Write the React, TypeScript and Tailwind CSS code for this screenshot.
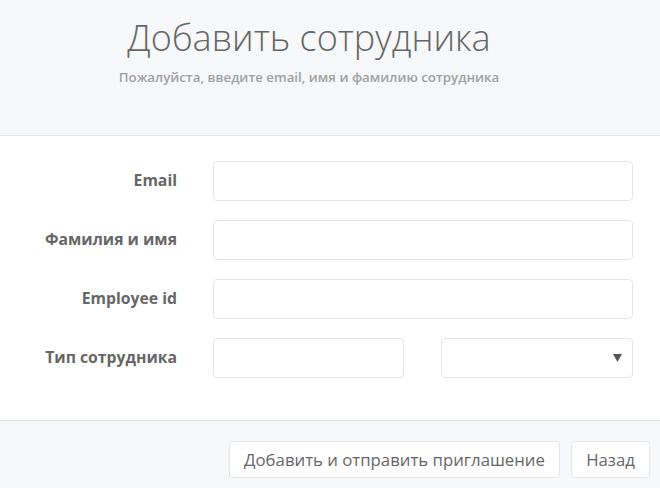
import React from 'react';

const rows = [
  { label: 'Email' },
  { label: 'Фамилия и имя' },
  { label: 'Employee id' },
];

const App = () => {
  return (
    <div className="w-[660px] h-[488px] bg-white overflow-hidden" style={{ fontFamily: '"Open Sans", sans-serif' }}>
      {/* Header */}
      <div className="h-[136px] bg-[#f7f8fa] border-b border-[#e3e4e6] w-full">
        <div className="w-[618px] flex flex-col items-center pt-[14px]">
          <h1 className="text-[36px] leading-[48px] font-light text-[#666]">Добавить сотрудника</h1>
          <p className="text-[13.3px] leading-[18px] font-semibold text-[#a0a0a0] mt-[6px]">
            Пожалуйста, введите email, имя и фамилию сотрудника
          </p>
        </div>
      </div>

      {/* Form */}
      <div className="flex flex-col gap-[19px] pt-[25px] pb-[42px]">
        {rows.map((row) => (
          <div key={row.label} className="flex items-center">
            <label className="w-[177px] text-right text-[15.75px] font-bold text-[#666]">{row.label}</label>
            <input className="ml-[36px] w-[420px] h-[40px] border border-[#e6e6e6] rounded-[4px] outline-none px-3" />
          </div>
        ))}
        <div className="flex items-center">
          <label className="w-[177px] text-right text-[15.75px] font-bold text-[#666]">Тип сотрудника</label>
          <input className="ml-[36px] w-[191px] h-[40px] border border-[#e6e6e6] rounded-[4px] outline-none px-3" />
          <div className="ml-[37px] w-[192px] h-[40px] border border-[#e6e6e6] rounded-[4px] flex items-center justify-end pr-[10px]">
            <svg width="9" height="8" viewBox="0 0 9 8">
              <path d="M0 0 L9 0 L4.5 8 Z" fill="#555" />
            </svg>
          </div>
        </div>
      </div>

      {/* Footer */}
      <div className="border-t border-[#e3e4e6] bg-[#f7f8fa] h-[68px] flex justify-end items-start gap-[11px] pt-[20px] pr-[10px]">
        <button className="h-[37px] w-[331px] bg-white border border-[#e6e6e6] rounded-[3px] text-[16.75px] text-[#666]">
          Добавить и отправить приглашение
        </button>
        <button className="h-[37px] w-[79px] bg-white border border-[#e6e6e6] rounded-[3px] text-[16.75px] text-[#666]">
          Назад
        </button>
      </div>
    </div>
  );
};

export default App;
